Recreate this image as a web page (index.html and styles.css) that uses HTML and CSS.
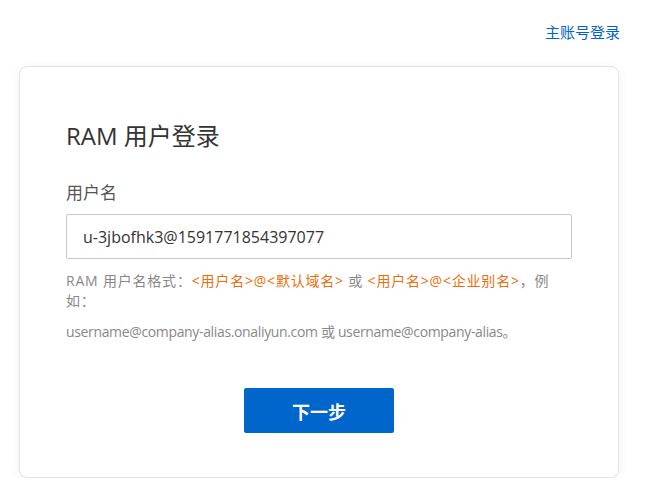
FILE: index.html
```html
<!DOCTYPE html>
<html lang="zh-CN">
<head>
    <meta charset="UTF-8">
    <meta name="viewport" content="width=device-width, initial-scale=1.0">
    <title>RAM 用户登录</title>
    <link rel="stylesheet" href="styles.css">
</head>
<body>

    <div class="page">
        <!-- Top link -->
        <div class="top-bar">
            <a href="#" class="main-login">主账号登录</a>
        </div>

        <!-- Login card -->
        <div class="login-card">
            <h2>RAM 用户登录</h2>
            <form id="login-form">
                <label class="field-label" for="username">用户名</label>
                <input type="text" id="username" value="u-3jbofhk3@1591771854397077">
                <p class="hint">RAM 用户名格式：<span class="em">&lt;用户名&gt;@&lt;默认域名&gt;</span> 或 <span class="em">&lt;用户名&gt;@&lt;企业别名&gt;</span>，例如：</p>
                <p class="hint example">username@company-alias.onaliyun.com 或 username@company-alias。</p>
                <div class="actions">
                    <button type="submit">下一步</button>
                </div>
            </form>
        </div>
    </div>

</body>
</html>
```

FILE: styles.css
```css
body {
    font-family: "Open Sans", "Noto Sans CJK SC", sans-serif;
    margin: 0;
    padding: 0;
    background: #fff;
    color: #333;
}
.page {
    width: 600px;
    margin-left: 19px;
}
.top-bar {
    text-align: right;
    padding-top: 21px;
    height: 66px;
    box-sizing: border-box;
}
.main-login {
    font-size: 15px;
    line-height: 20px;
    color: #0064c8;
    text-decoration: none;
    margin-right: -1px;
}
.login-card {
    background: #fff;
    border: 1px solid #e3e3e3;
    border-radius: 8px;
    box-shadow: 0 2px 12px rgba(0, 0, 0, 0.06);
    padding: 54px 46px 44px 46px;
}
.login-card h2 {
    margin: 0;
    font-size: 24px;
    line-height: 30px;
    font-weight: normal;
    color: #333;
}
.field-label {
    display: block;
    margin-top: 30px;
    margin-bottom: 10px;
    font-size: 17px;
    line-height: 23px;
    color: #555;
}
#login-form input[type="text"] {
    display: block;
    width: 100%;
    box-sizing: border-box;
    height: 45px;
    padding: 0 16px;
    border: 1px solid #c8c8c8;
    border-radius: 2px;
    font-family: inherit;
    font-size: 16px;
    color: #333;
    outline: none;
}
.hint {
    margin: 12px 0 0 0;
    font-size: 14px;
    line-height: 20px;
    color: #888;
    letter-spacing: 0.8px;
}
.hint .em {
    color: #ea6f0c;
}
.hint.example {
    margin-top: 11px;
    letter-spacing: -0.35px;
}
.actions {
    margin-top: 46px;
    text-align: center;
}
button {
    width: 150px;
    height: 45px;
    background-color: #0066cc;
    color: #fff;
    border: none;
    border-radius: 2px;
    font-family: inherit;
    font-size: 18px;
    font-weight: bold;
    cursor: pointer;
}
button:hover {
    background-color: #0057ad;
}
```
